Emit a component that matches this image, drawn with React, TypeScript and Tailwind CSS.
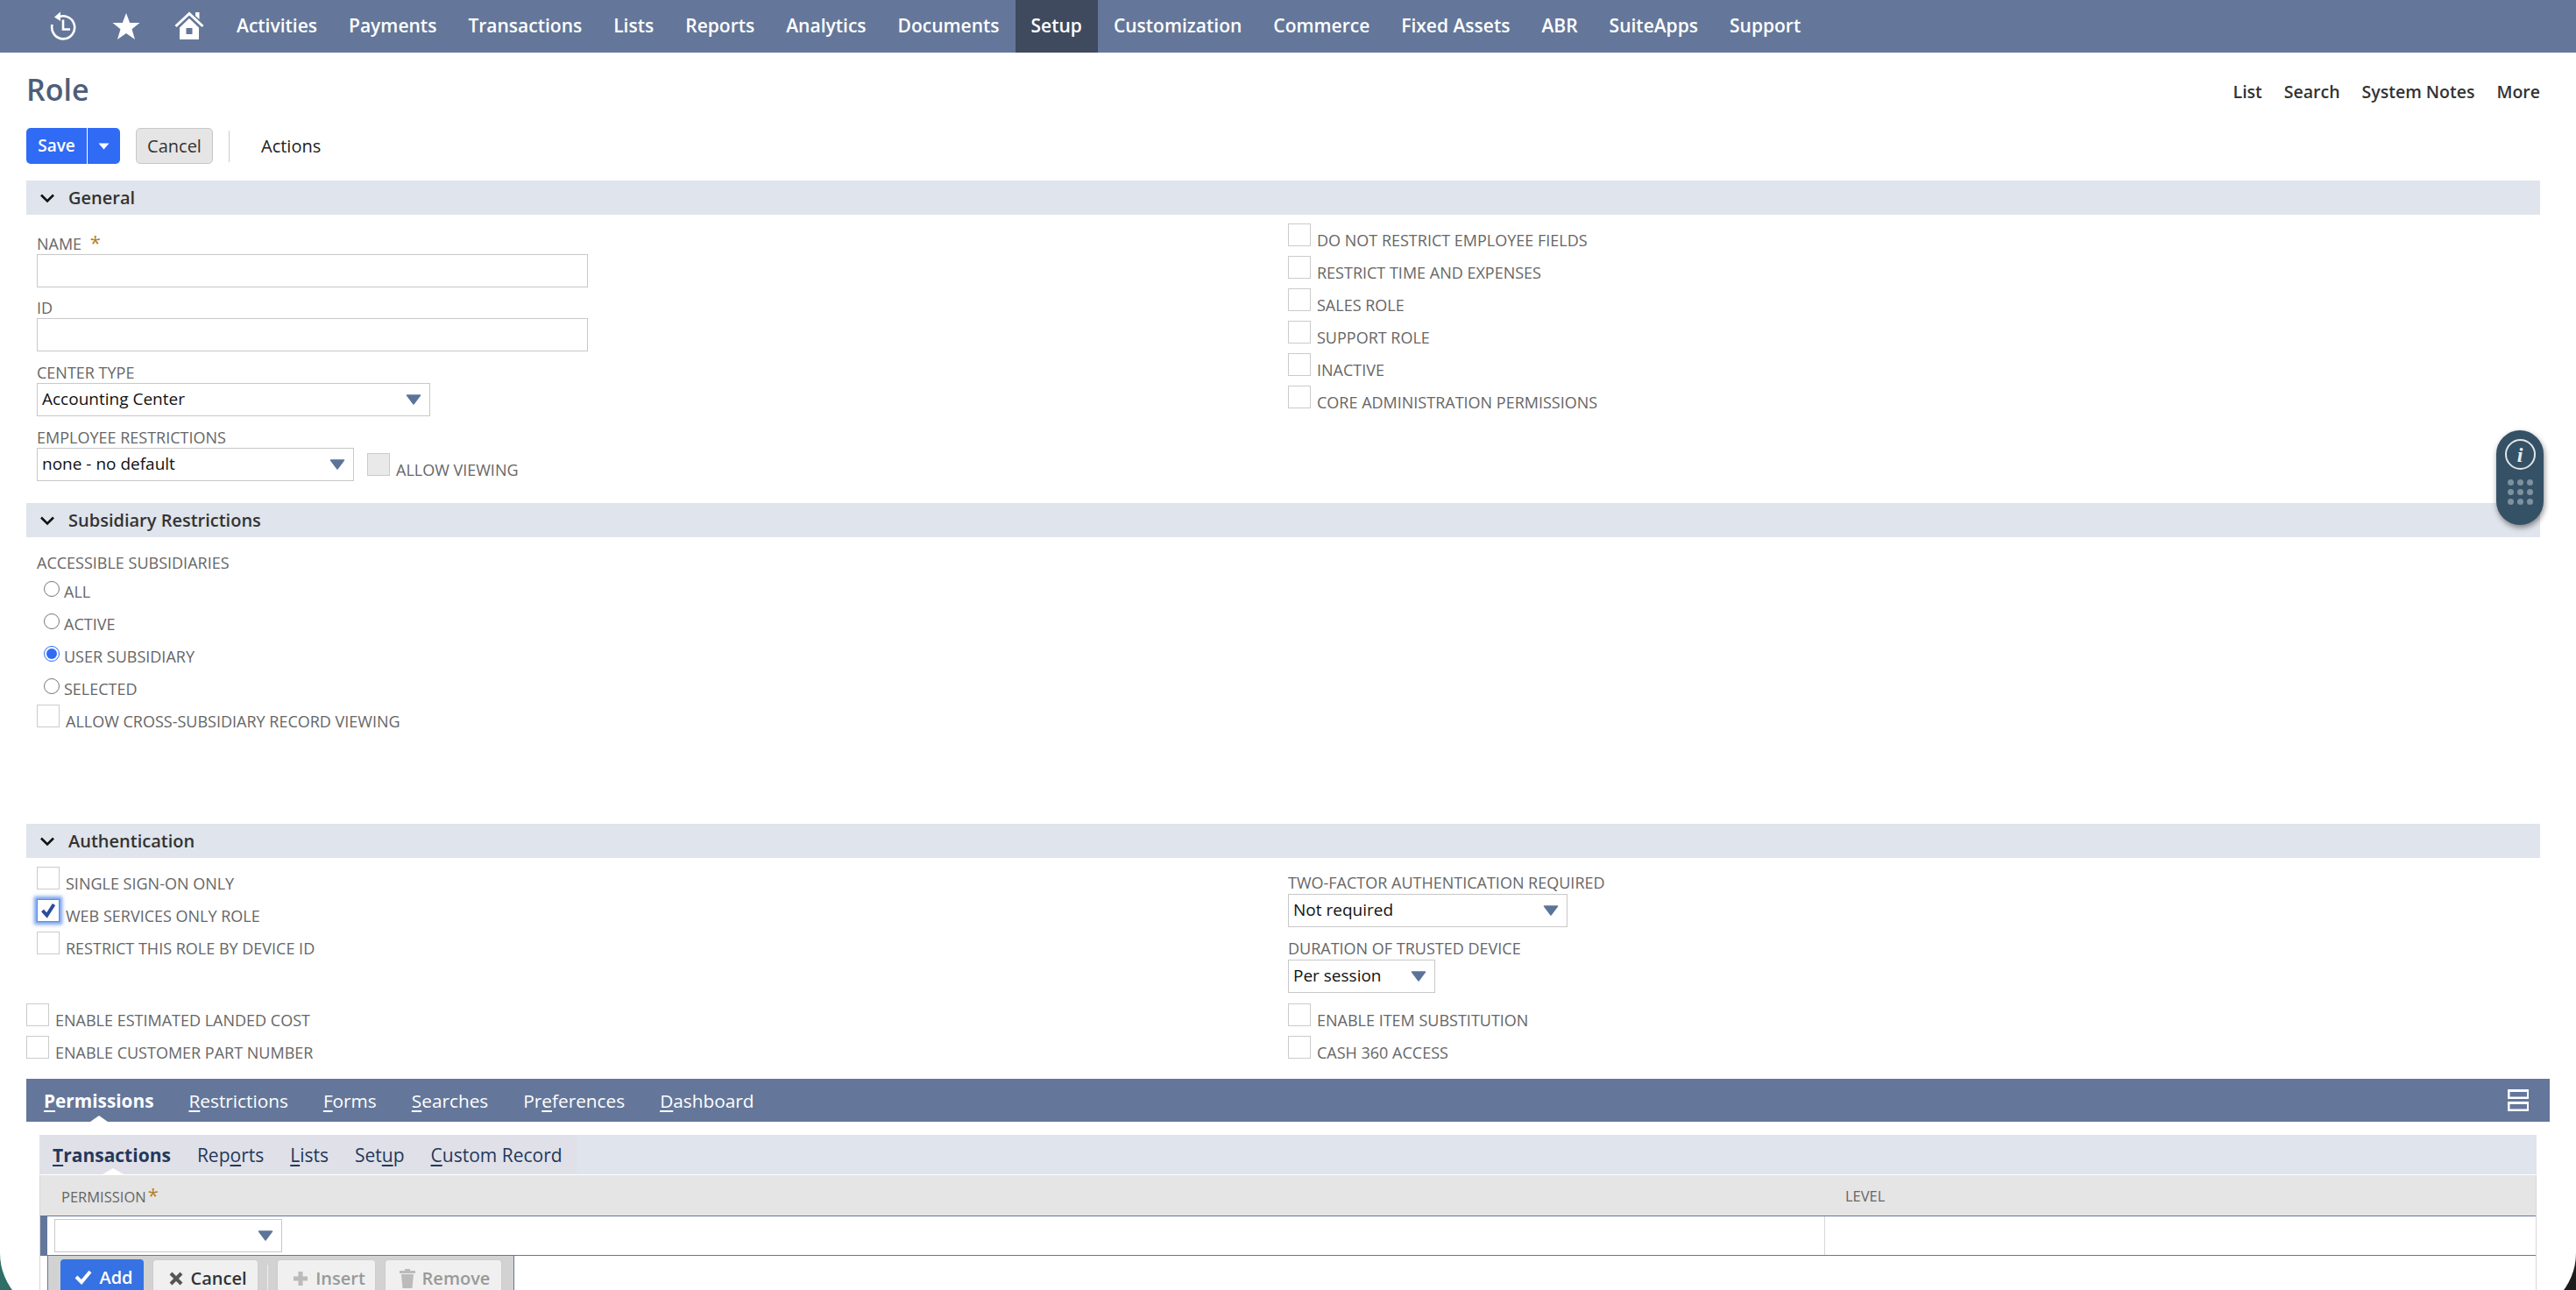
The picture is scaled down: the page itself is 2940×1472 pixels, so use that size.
import React from "react";

const navItems = ["Activities", "Payments", "Transactions", "Lists", "Reports", "Analytics", "Documents", "Setup", "Customization", "Commerce", "Fixed Assets", "ABR", "SuiteApps", "Support"];

function Caret({ className = "" }: { className?: string }) {
  return (
    <svg width="18" height="12" viewBox="0 0 18 12" className={className}>
      <path d="M1.5 1 H16.5 L9 11 Z" fill="#5d7499" stroke="#5d7499" strokeWidth="1.5" strokeLinejoin="round" />
    </svg>
  );
}

function Chevron() {
  return (
    <svg width="18" height="12" viewBox="0 0 18 12" className="ml-[15px] mr-[15px] shrink-0">
      <path d="M2 2.5 L9 9.5 L16 2.5" fill="none" stroke="#111" strokeWidth="2.6" />
    </svg>
  );
}

function SectionHeader({ title }: { title: string }) {
  return (
    <div className="flex h-[39px] items-center bg-[#e0e4ec] text-[20px] font-semibold text-[#333]">
      <Chevron />
      {title}
    </div>
  );
}

function Box({ disabled = false }: { disabled?: boolean }) {
  return <span className={`block h-[26px] w-[26px] shrink-0 border border-[#cbcbcb] ${disabled ? "bg-[#e9e9e9]" : "bg-white"}`} />;
}

function CheckRow({ label }: { label: string }) {
  return (
    <div className="flex h-[37px] items-start gap-[7px]">
      <Box />
      <span className="mt-[7px] text-[18px] leading-[24px] text-[#666]">{label}</span>
    </div>
  );
}

function Label({ children }: { children: React.ReactNode }) {
  return <div className="h-[24px] text-[18px] leading-[24px] text-[#666]">{children}</div>;
}

function Req({ className = "" }: { className?: string }) {
  return <span className={`leading-none text-[#b87d27] ${className}`}>*</span>;
}

function TextField() {
  return <div className="h-[38px] w-[629px] border border-[#c8c8c8] bg-white" />;
}

function Select({ value, width }: { value: string; width: string }) {
  return (
    <div className={`flex h-[38px] items-center justify-between border border-[#c8c8c8] bg-white pb-[1px] pl-[5px] pr-[9px] text-[19px] text-[#111] ${width}`}>
      <span>{value}</span>
      <Caret />
    </div>
  );
}

function RadioRow({ label, checked = false }: { label: string; checked?: boolean }) {
  return (
    <div className="flex h-[37px] items-start pl-[20px]">
      <span className={`mt-[10px] flex h-[18px] w-[18px] shrink-0 items-center justify-center rounded-full border-[1.5px] bg-white ${checked ? "border-[#2f6bf5]" : "border-[#777]"}`}>
        {checked && <span className="block h-[12px] w-[12px] rounded-full bg-[#2f6bf5]" />}
      </span>
      <span className="ml-[5px] mt-[10px] text-[18px] leading-[24px] text-[#666]">{label}</span>
    </div>
  );
}

function Accel({ pre = "", u, post }: { pre?: string; u: string; post: string }) {
  return (
    <span>
      {pre}
      <span className="underline underline-offset-[3px]">{u}</span>
      {post}
    </span>
  );
}

export default function App() {
  return (
    <div className="h-[1472px] w-[2940px] overflow-hidden bg-gradient-to-r from-[#2f6f68] via-[#222] to-[#1c1c1c] font-['Open_Sans',sans-serif]">
      <div className="relative h-[1500px] w-[2940px] overflow-hidden rounded-b-[70px] bg-white">
        {/* top nav */}
        <div className="flex h-[60px] items-center bg-[#64779a] pl-[57px] text-[21px] font-semibold text-white">
          <svg width="30" height="34" viewBox="0 0 30 34" className="shrink-0">
            <path d="M8 7.5 A13 13 0 1 1 2.6 15" fill="none" stroke="#fff" strokeWidth="2.6" />
            <path d="M12 0.5 L12 11 L5 6.5 Z" fill="#fff" />
            <path d="M15 9.5 V20.5 H23" fill="none" stroke="#fff" strokeWidth="2.6" />
          </svg>
          <svg width="32" height="32" viewBox="0 0 32 32" className="ml-[41px] shrink-0">
            <path d="M16 1 L20.2 12 L31.5 12 L22.5 19.3 L26 31 L16 24 L6 31 L9.5 19.3 L0.5 12 L11.8 12 Z" fill="#fff" />
          </svg>
          <svg width="34" height="34" viewBox="0 0 34 34" className="ml-[39px] shrink-0">
            <path d="M1.5 17 L17 2.5 L32.5 17" fill="none" stroke="#fff" strokeWidth="3" />
            <path d="M24 1 H28.5 V9 L24 5 Z" fill="#fff" />
            <path d="M6 18.5 L17 8 L28 18.5 V32 H6 Z M13.5 19 V26 H20.5 V19 Z" fill="#fff" fillRule="evenodd" />
          </svg>
          <div className="ml-[19px] flex h-full items-center">
            {navItems.map((item) => (
              <div key={item} className={`flex h-full items-center px-[18px] ${item === "Setup" ? "bg-[#3f4a5e]" : ""}`}>
                {item}
              </div>
            ))}
          </div>
        </div>

        <div className="pl-[30px]">
          {/* title */}
          <div className="flex h-[86px] w-[2869px] items-start justify-between">
            <h1 className="mt-[23px] text-[34px] font-semibold leading-[38px] text-[#4d5f7a]">Role</h1>
            <div className="mt-[32px] flex gap-[25px] text-[19.5px] font-semibold leading-[26px] text-[#333]">
              <span>List</span>
              <span>Search</span>
              <span>System Notes</span>
              <span>More</span>
            </div>
          </div>

          {/* buttons */}
          <div className="mb-[19px] flex h-[41px] items-center">
            <div className="flex h-[41px] w-[107px] overflow-hidden rounded-[5px] bg-[#2f6bf5] text-[19px] font-semibold text-white">
              <span className="flex w-[69px] items-center justify-center">Save</span>
              <span className="flex flex-1 items-center justify-center border-l border-white">
                <svg width="13" height="8" viewBox="0 0 13 8">
                  <path d="M0.5 0.5 H12.5 L6.5 7.5 Z" fill="#fff" />
                </svg>
              </span>
            </div>
            <div className="ml-[18px] flex h-[41px] w-[88px] items-center justify-center rounded-[5px] border border-[#c8c8c8] bg-[#e5e5e5] text-[20px] font-medium text-[#333]">Cancel</div>
            <span className="ml-[18px] block h-[36px] w-px bg-[#ccc]" />
            <span className="ml-[36px] text-[20px] font-medium text-[#222]">Actions</span>
          </div>

          <div className="w-[2869px]">
            <SectionHeader title="General" />
            <div className="grid h-[329px] grid-cols-[1440px_1fr]">
              <div className="pl-[12px] pt-[20px]">
                <div className="mb-[1px]">
                  <Label>
                    NAME <Req className="ml-[5px] text-[22px]" />
                  </Label>
                </div>
                <TextField />
                <div className="mt-[11px]">
                  <Label>ID</Label>
                </div>
                <TextField />
                <div className="mt-[12px]">
                  <Label>CENTER TYPE</Label>
                </div>
                <Select value="Accounting Center" width="w-[449px]" />
                <div className="mt-[12px]">
                  <Label>EMPLOYEE RESTRICTIONS</Label>
                </div>
                <div className="flex items-start">
                  <Select value="none - no default" width="w-[362px]" />
                  <div className="ml-[15px] mt-[6px] flex gap-[7px]">
                    <Box disabled />
                    <span className="mt-[7px] text-[18px] leading-[24px] text-[#666]">ALLOW VIEWING</span>
                  </div>
                </div>
              </div>
              <div className="pt-[10px]">
                <CheckRow label="DO NOT RESTRICT EMPLOYEE FIELDS" />
                <CheckRow label="RESTRICT TIME AND EXPENSES" />
                <CheckRow label="SALES ROLE" />
                <CheckRow label="SUPPORT ROLE" />
                <CheckRow label="INACTIVE" />
                <CheckRow label="CORE ADMINISTRATION PERMISSIONS" />
              </div>
            </div>

            <SectionHeader title="Subsidiary Restrictions" />
            <div className="h-[327px] pl-[12px] pt-[17px]">
              <Label>ACCESSIBLE SUBSIDIARIES</Label>
              <div className="-ml-[12px] -mt-[1px]">
                <RadioRow label="ALL" />
                <RadioRow label="ACTIVE" />
                <RadioRow label="USER SUBSIDIARY" checked />
                <RadioRow label="SELECTED" />
              </div>
              <div className="mt-[3px]">
                <CheckRow label="ALLOW CROSS-SUBSIDIARY RECORD VIEWING" />
              </div>
            </div>

            <SectionHeader title="Authentication" />
            <div className="grid h-[166px] grid-cols-[1440px_1fr]">
              <div className="pl-[12px] pt-[10px]">
                <CheckRow label="SINGLE SIGN-ON ONLY" />
                <div className="flex h-[37px] items-start gap-[7px]">
                  <span className="flex h-[26px] w-[26px] shrink-0 items-center justify-center border border-[#5b8fe8] bg-white shadow-[0_0_4px_3px_rgba(60,120,230,0.7)]">
                    <svg width="18" height="18" viewBox="0 0 18 18">
                      <path d="M2.5 9 L7.5 14.5 L15.5 2" fill="none" stroke="#2c4c9c" strokeWidth="4" />
                    </svg>
                  </span>
                  <span className="mt-[7px] text-[18px] leading-[24px] text-[#666]">WEB SERVICES ONLY ROLE</span>
                </div>
                <CheckRow label="RESTRICT THIS ROLE BY DEVICE ID" />
              </div>
              <div className="pt-[16px]">
                <Label>TWO-FACTOR AUTHENTICATION REQUIRED</Label>
                <div className="mt-[1px]">
                  <Select value="Not required" width="w-[319px]" />
                </div>
                <div className="mt-[12px]">
                  <Label>DURATION OF TRUSTED DEVICE</Label>
                </div>
                <div className="mt-[1px]">
                  <Select value="Per session" width="w-[168px]" />
                </div>
              </div>
            </div>
            <div className="grid grid-cols-[1440px_1fr]">
              <div>
                <CheckRow label="ENABLE ESTIMATED LANDED COST" />
                <CheckRow label="ENABLE CUSTOMER PART NUMBER" />
              </div>
              <div>
                <CheckRow label="ENABLE ITEM SUBSTITUTION" />
                <CheckRow label="CASH 360 ACCESS" />
              </div>
            </div>
          </div>

          {/* tab bar */}
          <div className="relative mt-[12px] flex h-[49px] w-[2880px] items-center justify-between bg-[#64779a] pl-[20px] pr-[23px] text-[20.8px] text-white">
            <div className="flex gap-[40px] pt-[2px]">
              <span className="font-bold"><Accel u="P" post="ermissions" /></span>
              <Accel u="R" post="estrictions" />
              <Accel u="F" post="orms" />
              <Accel u="S" post="earches" />
              <Accel pre="Pr" u="e" post="ferences" />
              <Accel u="D" post="ashboard" />
            </div>
            <svg width="26" height="27" viewBox="0 0 26 27">
              <path d="M1 1 H25 V12 H1 Z M3.5 4 V9.5 H23 V4 Z M1 15 H25 V26 H1 Z M3.5 18 V23.5 H23 V18 Z" fill="#fff" fillRule="evenodd" />
            </svg>
            <span className="absolute bottom-0 left-[73px] h-0 w-0 border-x-[10px] border-b-[7px] border-x-transparent border-b-white" />
          </div>

          {/* sub tabs */}
          <div className="ml-[15px] mt-[15px] w-[2850px]">
            <div className="flex h-[45px] bg-[#e0e4ec]">
              <div className="relative flex w-[613px] items-center gap-[30px] bg-[#e0e1e8] pl-[15px] pt-[2px] text-[21px] text-[#24385b]">
                <span className="font-bold"><Accel u="T" post="ransactions" /></span>
                <Accel pre="Rep" u="o" post="rts" />
                <Accel u="L" post="ists" />
                <Accel pre="Set" u="u" post="p" />
                <Accel u="C" post="ustom Record" />
                <span className="absolute bottom-0 left-[72px] h-0 w-0 border-x-[12px] border-b-[7px] border-x-transparent border-b-white" />
              </div>
            </div>

            <div className="border-x border-t border-[#d8d8d8] border-t-white">
              <div className="flex h-[46px] items-center bg-[#e5e5e5] pt-[2px] text-[16.5px] text-[#666]">
                <span className="ml-[24px] w-[2036px]">
                  PERMISSION<Req className="ml-[2px] text-[22px]" />
                </span>
                <span>LEVEL</span>
              </div>
              <div className="flex h-[46px] border-y border-[#64779a]">
                <div className="w-[8px] bg-[#64779a]" />
                <div className="ml-[8px] flex w-[2021px] items-center border-r border-[#d8d8d8]">
                  <div className="flex h-[38px] w-[260px] items-center justify-end border border-[#c8c8c8] bg-white pr-[9px]">
                    <Caret />
                  </div>
                </div>
              </div>
              {/* row actions */}
              <div className="ml-[8px] flex h-[60px] w-[533px] items-start gap-[10px] border-x border-[#64779a] bg-[#d2d2d2] pl-[14px] pt-[4px] text-[20px] font-semibold">
                <div className="flex h-[50px] w-[95px] items-start justify-center gap-[8px] rounded-[4px] bg-[#3672e3] pl-[4px] pt-[6px] text-white">
                  <svg width="20" height="18" viewBox="0 0 20 18" className="mt-[5px]">
                    <path d="M2 9 L8 15 L18 3" fill="none" stroke="#fff" strokeWidth="4" />
                  </svg>
                  Add
                </div>
                <div className="flex h-[50px] w-[121px] items-start justify-center gap-[8px] rounded-[4px] border border-[#ccc] bg-[#f0f0f0] pl-[6px] pt-[6px] text-[#333]">
                  <svg width="16" height="16" viewBox="0 0 16 16" className="mt-[7px]">
                    <path d="M2 2 L14 14 M14 2 L2 14" fill="none" stroke="#555" strokeWidth="4" />
                  </svg>
                  Cancel
                </div>
                <span className="mt-[6px] block h-[40px] w-px bg-[#eee]" />
                <div className="flex h-[50px] w-[113px] items-start justify-center gap-[8px] rounded-[4px] border border-[#ccc] bg-[#f0f0f0] pl-[6px] pt-[6px] text-[#999]">
                  <svg width="18" height="18" viewBox="0 0 18 18" className="mt-[6px]">
                    <path d="M9 1 V17 M1 9 H17" fill="none" stroke="#bbb" strokeWidth="5" />
                  </svg>
                  Insert
                </div>
                <div className="flex h-[50px] w-[134px] items-start justify-center gap-[8px] rounded-[4px] border border-[#ccc] bg-[#f0f0f0] pl-[3px] pt-[6px] text-[#999]">
                  <svg width="18" height="22" viewBox="0 0 18 22" className="mt-[4px]">
                    <path d="M6 0 H12 V2 H18 V5 H0 V2 H6 Z M2 6 H16 L14.5 22 H3.5 Z" fill="#bbb" />
                  </svg>
                  Remove
                </div>
              </div>
            </div>
          </div>
        </div>

        {/* floating help widget */}
        <div className="absolute left-[2849px] top-[491px] flex h-[108px] w-[54px] flex-col items-center rounded-[27px] bg-[#355166] pt-[10px] shadow-[1px_3px_6px_rgba(0,0,0,0.45)]">
          <div className="flex h-[35px] w-[35px] items-center justify-center rounded-full border-2 border-[#dfe5e8] font-['Liberation_Serif',serif] text-[24px] font-bold italic leading-none text-[#e8edf0]">i</div>
          <div className="mt-[11px] grid grid-cols-3 gap-x-[4px] gap-y-[4px]">
            {Array.from({ length: 9 }).map((_, i) => (
              <span key={i} className="block h-[7px] w-[7px] rounded-full bg-[#7d919f]" />
            ))}
          </div>
        </div>
      </div>
    </div>
  );
}
